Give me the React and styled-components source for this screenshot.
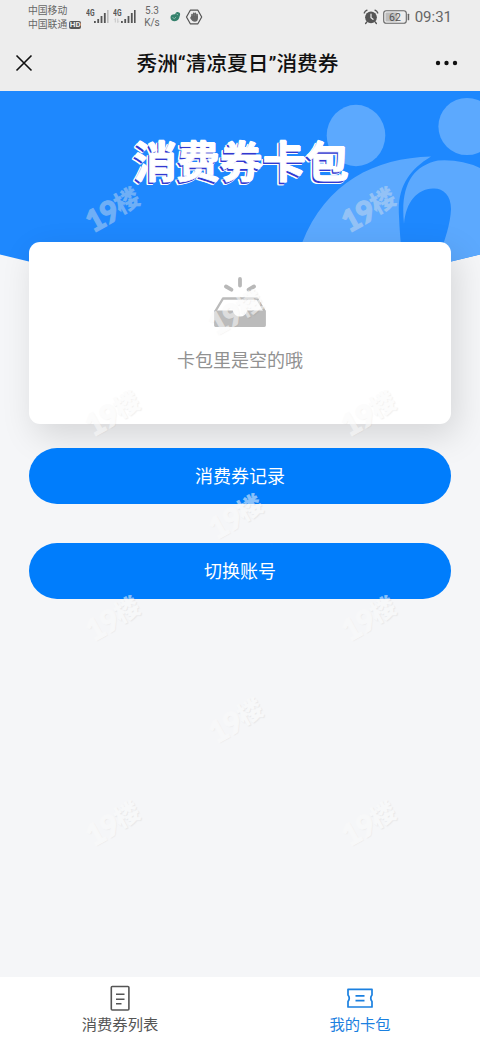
import React from 'react';
import styled, { createGlobalStyle } from 'styled-components';

const GlobalStyle = createGlobalStyle`
  body {
    margin: 0;
    background: #f5f6f8;
    font-family: Roboto, "Noto Sans CJK SC", sans-serif;
  }
`;

const Page = styled.div`
  position: relative;
  width: 480px;
  height: 1040px;
  overflow: hidden;
  display: flex;
  flex-direction: column;
  background: #f5f6f8;
`;

const StatusBar = styled.div`
  height: 34px;
  padding: 0 28px;
  display: flex;
  align-items: center;
  justify-content: space-between;
  background: #ededed;
  color: #666;
`;

const StatusGroup = styled.div`
  display: flex;
  align-items: center;
  height: 34px;
  gap: ${props => props.$gap}px;
`;

const Carriers = styled.div`
  width: 55px;
  padding-top: 2px;
  font-size: 9.8px;
  line-height: 14px;
  white-space: nowrap;
`;

const CarrierLine = styled.div`
  display: flex;
  align-items: center;
  gap: 2px;
`;

const HdBadge = styled.span`
  width: 12px;
  height: 8px;
  border-radius: 2px;
  background: #555;
  color: #ededed;
  font-size: 8px;
  line-height: 8px;
  font-weight: 700;
  text-align: center;
`;

const Speed = styled.div`
  width: 24px;
  margin-right: 2px;
  font-size: 10px;
  line-height: 12px;
  text-align: center;
`;

const Clock = styled.span`
  margin-left: 1px;
  font-size: 15px;
  line-height: 34px;
`;

const TitleBar = styled.div`
  height: 57px;
  padding: 0 22px 0 15px;
  display: flex;
  align-items: center;
  justify-content: space-between;
  background: #ededed;
`;

const Title = styled.div`
  padding: 3px 0 0 7px;
  font-family: Roboto, "Noto Sans CJK SC", sans-serif;
  font-size: 20.7px;
  font-weight: 500;
  line-height: 54px;
  color: #111;
  white-space: nowrap;
`;

const Hero = styled.div`
  position: relative;
  height: 182px;
`;

const HeroArt = styled.svg`
  position: absolute;
  top: 0;
  left: 0;
`;

const HeroTitle = styled.h1`
  position: relative;
  margin: 0;
  padding: 35px 0 0 2px;
  font-family: "Noto Sans CJK SC", sans-serif;
  font-size: 43px;
  line-height: 66px;
  font-weight: 700;
  text-align: center;
  color: #fff;
  -webkit-text-stroke: 0.8px #fff;
  text-shadow: -1.5px 1.5px 0 #3238d0, -2px 3px 0 #fff, -3px 2px 0 #fff, -3px 3px 0 #fff, 1px 0 0 #fff, 0 -1px 0 #fff;
`;

const Content = styled.div`
  position: relative;
  flex: 1;
  margin-top: -31px;
  padding: 0 29px;
  display: flex;
  flex-direction: column;
`;

const Card = styled.div`
  height: 182px;
  box-sizing: border-box;
  padding-top: 34px;
  margin-bottom: 24px;
  display: flex;
  flex-direction: column;
  align-items: center;
  border-radius: 11px;
  background: #fff;
  box-shadow: 6px 12px 34px rgba(0, 0, 0, 0.13);
`;

const EmptyText = styled.div`
  margin-top: 18px;
  font-size: 18px;
  line-height: 30px;
  color: #919191;
`;

const Button = styled.button`
  height: 56px;
  flex: none;
  margin: 0 0 39px;
  padding: 0;
  border: 0;
  border-radius: 28px;
  background: #007dfc;
  color: #fff;
  font: 18px/54px "Noto Sans CJK SC", sans-serif;
  padding-bottom: 2px;
`;

const TabBar = styled.div`
  height: 63px;
  display: flex;
  background: #fff;
`;

const Tab = styled.div`
  flex: 1;
  display: flex;
  flex-direction: column;
  align-items: center;
  padding-top: 6px;
  font-size: 15.3px;
  line-height: 24px;
  color: ${props => props.$active ? '#1b80e0' : '#555'};
`;

const TabIcon = styled.svg`
  display: block;
  margin-bottom: 2px;
`;

const Watermark = styled.div`
  position: absolute;
  left: ${props => props.$x - 33}px;
  top: ${props => props.$y - 21}px;
  width: 64px;
  height: 40px;
  display: flex;
  align-items: center;
  justify-content: center;
  transform: rotate(-29deg);
  font-family: Lato, sans-serif;
  font-size: 30px;
  font-weight: 900;
  letter-spacing: -1px;
  line-height: 40px;
  white-space: nowrap;
  pointer-events: none;
  opacity: ${props => props.$onBlue ? 0.42 : 0.55};
  color: ${props => props.$onBlue ? '#e0e6ec' : '#fafafa'};
  -webkit-text-stroke: 1.2px ${props => props.$onBlue ? '#e0e6ec' : '#fafafa'};
  text-shadow: ${props => props.$onBlue ? 'none' : '0.5px 1px 1px rgba(0, 0, 0, 0.1)'};
`;

const WatermarkHan = styled.span`
  position: relative;
  top: -2px;
  font-family: "Noto Sans CJK SC", sans-serif;
  font-size: 25px;
  -webkit-text-stroke-width: 0;
`;

const WATERMARKS = [
  [113, 210], [369, 210],
  [236, 313],
  [113, 414], [369, 414],
  [236, 517],
  [113, 619], [369, 619],
  [236, 721],
  [113, 824], [369, 824],
];

function Signal({ faded = false }) {
  return (
    <svg width="24" height="18" viewBox="0 0 24 18" fill="#555">
      <text x="0" y="7.5" fontSize="8.5" fontWeight="700" fontFamily="Roboto" textLength="8.5" lengthAdjust="spacingAndGlyphs">4G</text>
      <rect x="8" y="13" width="1.8" height="2" />
      <rect x="11.3" y="11" width="1.8" height="4" />
      <rect x="14.6" y="8" width="1.8" height="7" />
      <rect x="17.9" y="5" width="1.8" height="10" />
      <rect x="21" y="2" width="1.6" height="13" fill={faded ? '#bbb' : '#555'} />
      {!faded && <path d="M2.3 14.5v-4l-1 1M4.8 10.5v4l1-1" fill="none" stroke="#bbb" strokeWidth="0.8" />}
    </svg>
  );
}

function StatusIcons() {
  return (
    <svg width="36" height="18" viewBox="0 0 36 18">
      <path d="M1.5 9.4C1.5 7 3.6 6 6.2 6.3 6.6 4.2 8 3.6 9.4 4.2c1.8.2 2.2 2 1.3 3.8-.4 3-2 5.2-5 5.2-2.6 0-4.2-1.6-4.2-3.8Z" fill="#35816c" />
      <path d="M3.500 9.500l2 1.200 1.500-1.800M7.500 6l1.600.8" fill="none" stroke="#9cc4b6" strokeWidth="0.8" />
      <path d="M21.300 2.200h7.600L32.700 9l-3.800 6.800h-7.600L17.500 9Z" fill="none" stroke="#555" strokeWidth="1.2" strokeLinejoin="round" />
      <path d="M23 9V6.600M24.700 9V5.300M26.400 9V5.300M28.100 10V6.600" stroke="#666" strokeWidth="1.6" strokeLinecap="round" />
      <path d="M22.200 8h6.700v2.800c0 2-1.300 2.900-3 2.900-2 0-3-1-4.800-3.800Z" fill="#666" />
    </svg>
  );
}

function AlarmIcon() {
  return (
    <svg width="16" height="16" viewBox="0 0 16 16" fill="none" stroke="#555" strokeLinecap="round">
      <circle cx="8" cy="8.3" r="5.9" fill="#555" stroke="none" />
      <path d="M1.2 4c.5-1.3 1.5-2.3 2.8-2.8M14.8 4c-.5-1.3-1.5-2.3-2.8-2.8M3.8 13l-1.2 1.5M12.2 13l1.2 1.5" strokeWidth="1.3" />
      <path d="M8 5v3.6l2 1.7" stroke="#ededed" strokeWidth="1.2" />
    </svg>
  );
}

function Battery() {
  return (
    <svg width="27" height="14" viewBox="0 0 27 14">
      <rect x="0.7" y="0.7" width="22.6" height="12.6" rx="2.6" fill="none" stroke="#666" strokeWidth="1.1" />
      <rect x="2.5" y="2.5" width="12" height="9" rx="1" fill="#bcbcbc" />
      <rect x="24.7" y="3.8" width="1.5" height="6.4" rx="0.5" fill="#666" />
      <text x="12" y="10.6" textAnchor="middle" fontFamily="Roboto" fontSize="10.5" fill="#555">62</text>
    </svg>
  );
}

function EmptyIcon() {
  return (
    <svg width="54" height="52" viewBox="0 0 54 52">
      <path d="M27 3v6.5M13 10.5l5.4 3.2M41 10.5l-5.4 3.2" stroke="#b8b8b8" strokeWidth="3.8" strokeLinecap="round" />
      <path d="M10 22.5h34L51.5 35v14.5h-49V35Z" fill="none" stroke="#bbb" strokeWidth="2.4" strokeLinejoin="round" />
      <path d="M1.3 34.5h18.5c1 4 3.4 6 7.2 6s6.2-2 7.2-6h18.5V49a2 2 0 0 1-2 2H3.3a2 2 0 0 1-2-2Z" fill="#bbb" />
    </svg>
  );
}

function App() {
  return (
    <Page>
      <GlobalStyle />
      <StatusBar>
        <StatusGroup $gap={3}>
          <Carriers>
            <CarrierLine>中国移动</CarrierLine>
            <CarrierLine>中国联通 <HdBadge>HD</HdBadge></CarrierLine>
          </Carriers>
          <Signal faded />
          <Signal />
          <Speed>5.3 K/s</Speed>
          <StatusIcons />
        </StatusGroup>
        <StatusGroup $gap={4}>
          <AlarmIcon />
          <Battery />
          <Clock>09:31</Clock>
        </StatusGroup>
      </StatusBar>
      <TitleBar>
        <svg width="18" height="18" viewBox="0 0 18 18" stroke="#111" strokeWidth="1.6">
          <path d="M1.5 1.5l15 15M16.5 1.5l-15 15" />
        </svg>
        <Title>秀洲“清凉夏日”消费券</Title>
        <svg width="23" height="6" viewBox="0 0 23 6" fill="#111">
          <circle cx="3" cy="3" r="2.2" />
          <circle cx="11.5" cy="3" r="2.2" />
          <circle cx="20" cy="3" r="2.2" />
        </svg>
      </TitleBar>
      <Hero>
        <HeroArt width="480" height="190" viewBox="0 91 480 190">
          <defs>
            <clipPath id="heroShape">
              <path d="M0 91H480V254.5Q360 286 240 286T0 254.5Z" />
            </clipPath>
          </defs>
          <g clipPath="url(#heroShape)">
            <rect y="91" width="480" height="200" fill="#1e88fe" />
            <g fill="#5ca9fe">
              <ellipse cx="356" cy="135.5" rx="29.3" ry="30.7" />
              <circle cx="467" cy="126.5" r="28.6" />
              <path d="M431 156.5C375 158 326 182 302 243V290H408C402 262 400 239 399 216C397 187 409 170 431 156.5Z" />
              <path d="M404 224C400 186 412 166 438 160.5Q461 159 480 168V290H430C437 255 450 234 451 209C451 195 443 188 433 188.5C417 189 406 202 404 224Z" />
            </g>
          </g>
        </HeroArt>
        <HeroTitle>消费券卡包</HeroTitle>
      </Hero>
      <Content>
        <Card>
          <EmptyIcon />
          <EmptyText>卡包里是空的哦</EmptyText>
        </Card>
        <Button>消费券记录</Button>
        <Button>切换账号</Button>
      </Content>
      <TabBar>
        <Tab>
          <TabIcon width="28" height="28" viewBox="0 0 28 28" fill="none" stroke="#555" strokeWidth="1.6">
            <rect x="5.3" y="3.5" width="17.6" height="23.5" rx="1" />
            <path d="M10 11.2h8.5M10 16.2h8.5M10 20.8h5.5" />
          </TabIcon>
          消费券列表
        </Tab>
        <Tab $active>
          <TabIcon width="28" height="28" viewBox="0 0 28 28" fill="none" stroke="#1b80e0" strokeWidth="1.7">
            <path d="M2 6.3H26V12Q23.5 15.2 26 18.5V24H2V18.5Q4.5 15.2 2 12Z" strokeLinejoin="round" />
            <path d="M9.5 12.8h9M9.5 17.7h9" />
          </TabIcon>
          我的卡包
        </Tab>
      </TabBar>
      {WATERMARKS.map(([x, y]) => (
        <Watermark key={`${x}-${y}`} $x={x} $y={y} $onBlue={y === 210}>
          19<WatermarkHan>楼</WatermarkHan>
        </Watermark>
      ))}
    </Page>
  );
}

export default App;
